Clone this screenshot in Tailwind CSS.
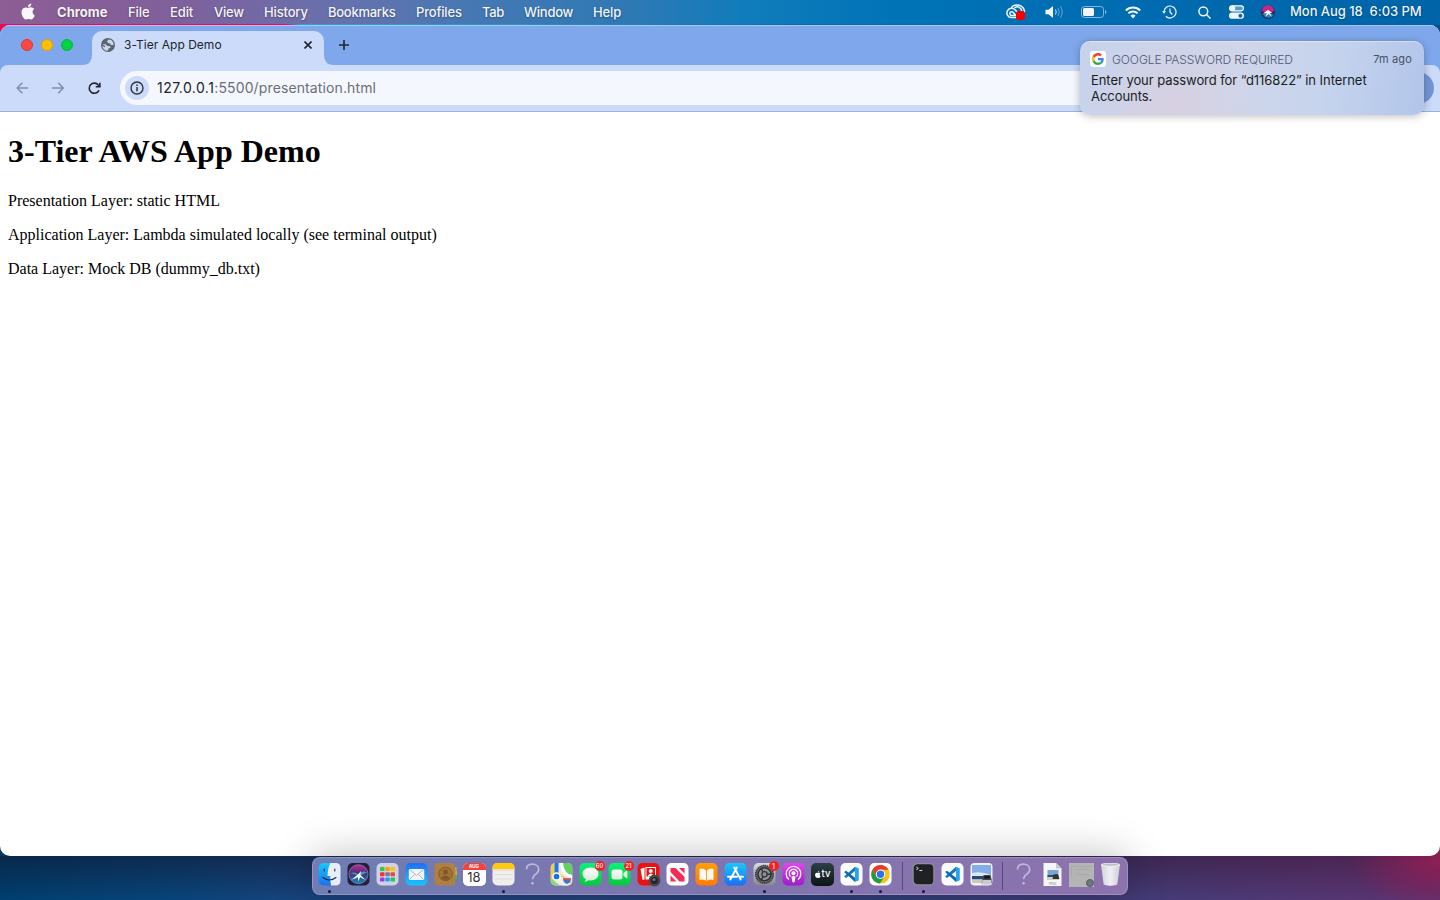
<!DOCTYPE html>
<html lang="en">
<head>
<meta charset="utf-8">
<title>3-Tier App Demo</title>
<script src="https://cdn.jsdelivr.net/npm/@tailwindcss/browser@4"></script>
</head>
<body class="w-[1440px] h-[900px] overflow-hidden font-['Inter',sans-serif] bg-[radial-gradient(ellipse_90px_50px_at_1440px_862px,rgba(150,30,85,.85),rgba(150,30,85,0)),linear-gradient(90deg,rgba(120,20,60,0)_50%,rgba(120,20,60,.45)_100%),linear-gradient(180deg,rgba(20,8,20,.42)_856px,rgba(20,8,20,0)_900px),linear-gradient(90deg,#003f70_0%,#08447a_12%,#1f4480_25%,#27437c_50%,#304a8c_78%,#3e4c96_92%,#454a98_100%)] relative">
<svg width="0" height="0" class="absolute">
  <defs>
    <linearGradient id="gBlue" x1="0" y1="0" x2="0" y2="1"><stop offset="0" stop-color="#19c8fb"/><stop offset="1" stop-color="#1b6ef3"/></linearGradient>
    <linearGradient id="gMail" x1="0" y1="0" x2="0" y2="1"><stop offset="0" stop-color="#1f6ff5"/><stop offset="1" stop-color="#18c5fa"/></linearGradient>
    <linearGradient id="gGreen" x1="0" y1="0" x2="0" y2="1"><stop offset="0" stop-color="#0cf27a"/><stop offset="1" stop-color="#06c83c"/></linearGradient>
    <linearGradient id="gPod" x1="0" y1="0" x2="0" y2="1"><stop offset="0" stop-color="#e844f4"/><stop offset="1" stop-color="#9a1fc4"/></linearGradient>
    <linearGradient id="gBook" x1="0" y1="0" x2="0" y2="1"><stop offset="0" stop-color="#ff9e0a"/><stop offset="1" stop-color="#ff7a00"/></linearGradient>
    <linearGradient id="gGrey" x1="0" y1="0" x2="0" y2="1"><stop offset="0" stop-color="#d8dade"/><stop offset="1" stop-color="#85878c"/></linearGradient>
    <linearGradient id="gSoft" x1="0" y1="0" x2="0" y2="1"><stop offset="0" stop-color="#fff"/><stop offset="1" stop-color="#d3ead6"/></linearGradient>
    <linearGradient id="gSiri" x1="0" y1="0" x2="0" y2="1"><stop offset="0" stop-color="#c22a92"/><stop offset=".45" stop-color="#4c2b7c"/><stop offset="1" stop-color="#1587b4"/></linearGradient>
    <linearGradient id="gTrash" x1="0" y1="0" x2="1" y2="0"><stop offset="0" stop-color="#d2d2da"/><stop offset=".5" stop-color="#efeff3"/><stop offset="1" stop-color="#cdccd6"/></linearGradient>
    <symbol id="apple" viewBox="0 0 24 24"><path d="M17.1 12.7c0-2.6 2.1-3.8 2.2-3.9-1.2-1.8-3.1-2-3.7-2-1.6-.2-3.1.9-3.9.9s-2-.9-3.4-.9c-1.700 0-3.300 1-4.200 2.600-1.800 3.100-.5 7.700 1.300 10.200.9 1.200 1.900 2.600 3.200 2.600 1.300-.1 1.800-.8 3.400-.8s2 .8 3.400.8 2.300-1.200 3.100-2.500c1-1.400 1.400-2.800 1.400-2.800s-2.800-1.100-2.800-4.200zM14.500 5.100c.7-.9 1.200-2.100 1.100-3.300-1 0-2.300.7-3 1.500-.7.8-1.300 2-1.100 3.200 1.100.1 2.300-.6 3-1.400z"/></symbol>
    <symbol id="question" viewBox="0 0 22 23"><path d="M5 6.500C5 3 7.500 1.200 11 1.200s6.200 2 6.200 5.300c0 3-2 4.100-4 5.500-1.500 1-2.100 2.100-2.100 4.200" fill="none" stroke="#bfb9dc" stroke-width="1.700"/><circle cx="11" cy="20.300" r="1.300" fill="#bfb9dc"/></symbol>
    <symbol id="vscode" viewBox="0 0 22 23"><rect width="22" height="22.500" rx="5" fill="#fdfdff"/><path d="M14.500 3.700 18.300 5.300v12l-3.800 1.700z" fill="#2aa3ee"/><path d="M14.500 3.700v4.200L5.500 15 3.600 13.600z" fill="#1276bf"/><path d="M14.500 19v-4.200L5.500 7.700 3.600 9z" fill="#0b68b0"/></symbol>
  </defs>
</svg>

<div class="flex h-[900px] flex-col">
  <!-- Menu bar -->
  <header class="flex h-6 shrink-0 items-center bg-[linear-gradient(90deg,#8d5d94_0%,#80609b_12%,#6572ae_24%,#4578b3_33%,#3079b4_43%,#107cbb_52%,#0073b7_62%,#0069ae_85%,#0064a8_100%)] text-[13px] font-medium text-white/95 [text-shadow:0_1px_2px_rgba(0,0,0,.3)]">
    <svg class="-mt-px ml-[18px] mr-[18px] h-[19px] w-[21px] fill-white/95"><use href="#apple"/></svg>
    <nav class="flex whitespace-nowrap pt-[2px]">
      <span class="w-[71px] font-bold tracking-[.05px]">Chrome</span>
      <span class="w-[42px] tracking-[-.1px]">File</span>
      <span class="w-[44px] tracking-[-.1px]">Edit</span>
      <span class="w-[50px] tracking-[-.2px]">View</span>
      <span class="w-[64px] tracking-[-.15px]">History</span>
      <span class="w-[88px] tracking-[-.27px]">Bookmarks</span>
      <span class="w-[66px] tracking-[-.17px]">Profiles</span>
      <span class="w-[42px] tracking-[-.3px]">Tab</span>
      <span class="w-[69px] tracking-[-.25px]">Window</span>
      <span class="tracking-[-.1px]">Help</span>
    </nav>
    <div class="ml-auto flex items-center">
      <svg class="mr-[18px]" width="22" height="18" viewBox="0 0 22 18" fill="none" stroke="#eef5fb" stroke-width="1.500"><path d="M6 5.500C8 1.200 15.500.6 18.500 5.500q1.200 2 1 4M12.500 14.600H6A4.700 4.700 0 1 1 10 6.700l4.500 4.700"/><path d="M11 12.600 8.600 10A1.900 1.900 0 1 0 7 12.500h4M9.500 5c3-2.500 6.500-1 7.500 3.500"/><rect x="11" y="8" width="9" height="9" rx="2.500" fill="#f50000" stroke="none"/></svg>
      <svg class="mr-[17px]" width="19" height="14" viewBox="0 0 19 14" fill="none"><path d="M.5 4.800h3L8 1v12L3.500 9.300h-3z" fill="#f0f5fa"/><path d="M10.500 4.500q1.500 2.500 0 5" stroke="#fff" stroke-opacity=".8"/><path d="M13 3q2.500 4 0 8M15.500 1.500q3.500 5.500 0 11" stroke="#fff" stroke-opacity=".4"/></svg>
      <svg class="mr-[18px]" width="26" height="12" viewBox="0 0 26 12"><rect x=".5" y=".5" width="22" height="11" rx="3" fill="none" stroke="#fff" stroke-opacity=".5"/><rect x="2" y="2" width="11" height="8" rx="1.500" fill="#f2f6fa"/><path d="M24 4v4q1.500-.5 1.500-2T24 4" fill="#fff" fill-opacity=".5"/></svg>
      <svg class="mr-[21px]" width="16" height="13" viewBox="0 0 16 13" fill="none" stroke="#f2f6fa" stroke-width="1.900"><path d="M.8 4.500a10.300 10.300 0 0 1 14.400 0M3.400 7.300a6.700 6.700 0 0 1 9.200 0"/><path d="m8 12.400 2.500-2.700a3.700 3.700 0 0 0-5 0z" fill="#f2f6fa" stroke="none"/></svg>
      <svg class="mr-[21px]" width="15" height="14" viewBox="0 0 15 14" fill="none" stroke="#f2f6fa" stroke-width="1.200"><path d="M2 7a6 6 0 1 1 1.800 4.300M8 3.500V7l2.300 2.500"/><path d="M0 6.200h4L2 8.800z" fill="#f2f6fa" stroke="none"/></svg>
      <svg class="mr-[18px]" width="13" height="13" viewBox="0 0 13 13" fill="none" stroke="#f2f6fa" stroke-width="1.500"><circle cx="5.300" cy="5.300" r="4.400"/><path d="m8.500 8.500 4 4"/></svg>
      <svg class="mr-[17px]" width="15" height="14" viewBox="0 0 15 14"><rect x="0" y=".2" width="15" height="6.200" rx="3.100" fill="#f2f6fa" fill-opacity=".35"/><rect x=".6" y=".8" width="13.800" height="5" rx="2.500" fill="none" stroke="#f2f6fa" stroke-width="1.200"/><circle cx="3.500" cy="3.300" r="2.800" fill="#f2f6fa"/><rect y="7.500" width="15" height="6.300" rx="3.150" fill="#f2f6fa"/><circle cx="11.400" cy="10.650" r="2" fill="#0d6aad"/></svg>
      <svg class="mr-[15px]" width="14" height="14" viewBox="0 0 14 14"><circle cx="7" cy="7" r="7" fill="#35275f"/><path d="M1 6a6 6 0 0 1 12 0L7 8z" fill="#c22b86"/><path d="M1.500 9.500 7 6l5.500 4a6 6 0 0 1-10 0z" fill="#2784b8"/><path d="m2 8.500 5-3.500 4.500 3-3-.2 2.500 4L7.500 9 4 12l2-4z" fill="#fff"/></svg>
      <span class="mr-[18px] w-[132px] whitespace-pre tracking-[-.04px]">Mon Aug 18  6:03 PM</span>
    </div>
  </header>
  <div class="h-px shrink-0 bg-[linear-gradient(90deg,#f20758_0,#f20758_285px,#29a5cc_300px,#219cc8_500px,#096aad_800px,#0061a4)]"></div>

  <!-- Browser window -->
  <div class="h-[831px] shrink-0 bg-[linear-gradient(90deg,#e90b55_50%,#0a4e86_50%),linear-gradient(90deg,#003a64_50%,#8a2050_50%)] bg-[length:100%_40px,100%_100%] bg-no-repeat">
  <main class="flex h-[831px] flex-col overflow-hidden rounded-[10px] bg-white">
    <div class="flex h-10 shrink-0 items-start border-t border-[#a9c6f5] bg-[#7fa8ec]">
      <div class="ml-[21px] mt-[13px] flex gap-2">
        <i class="size-3 rounded-full border border-[#de352f] bg-[#ff4742]"></i>
        <i class="size-3 rounded-full border border-[#dfa000] bg-[#ffbd03]"></i>
        <i class="size-3 rounded-full border border-[#08b83a] bg-[#00d341]"></i>
      </div>
      <svg class="mt-[29px]" width="19" height="10" viewBox="0 0 19 10"><path d="M19 0v10H9Q19 10 19 0" fill="#cbdbf9"/></svg>
      <div class="mt-[5px] flex h-[34px] w-[232px] items-center rounded-t-[10px] bg-[#cbdbf9] pb-[6px]">
        <svg class="ml-[9px]" width="14" height="14" viewBox="0 0 14 14"><circle cx="7" cy="7" r="7" fill="#5e6469"/><path d="M7.500 1.400 6 3.600 7 5l2 .2.500 1.500 3.200.5Q13 4 10.500 2.300 9 1.300 7.500 1.400" fill="#c6d7f5"/><path d="M1.300 6.300 4.500 6.300 6.500 8l2.800.3.200 1.500-2 .7-.7 2.300Q2 12.500 1.300 8l2.700 1.200.2-1.200z" fill="#c6d7f5"/></svg>
        <span class="ml-[9px] whitespace-nowrap text-xs text-[#20242b] tracking-[.02px]">3-Tier App Demo</span>
        <svg class="ml-auto mr-[12px]" width="8" height="8" viewBox="0 0 8 8" stroke="#20242b" stroke-width="1.600"><path d="m.5.5 7 7m0-7-7 7"/></svg>
      </div>
      <svg class="mt-[29px]" width="10" height="10" viewBox="0 0 10 10"><path d="M0 0v10h10Q0 10 0 0" fill="#cbdbf9"/></svg>
      <svg class="ml-[5px] mt-[14px]" width="10" height="10" viewBox="0 0 10 10" stroke="#20242b" stroke-width="1.600"><path d="M5 0v10M0 5h10"/></svg>
    </div>
    <div class="bg-[#7fa8ec]">
      <div class="flex h-[47px] items-center rounded-t-lg border-b border-[#9eb2d3] bg-[#cbdbf9]">
        <svg class="ml-4 shrink-0" width="13" height="12" viewBox="0 0 13 12" fill="none" stroke="#8390a9" stroke-width="1.500"><path d="M12 6H1.500M6.300.8 1.200 6l5.100 5.200"/></svg>
        <svg class="ml-[23px] shrink-0" width="13" height="12" viewBox="0 0 13 12" fill="none" stroke="#8390a9" stroke-width="1.500"><path d="M0 6h11.500M6.200.8 11.300 6l-5.100 5.200"/></svg>
        <svg class="ml-[23px] shrink-0" width="13" height="13" viewBox="0 0 13 13" fill="none" stroke="#20242b" stroke-width="1.600"><path d="M11 8.200A5.100 5.100 0 1 1 10.300 3l1.500 1.500M11.900.7v4.100H7.800"/></svg>
        <div class="ml-[19px] flex h-[34px] w-[1254px] shrink-0 items-center rounded-full bg-[#f4f7fe]">
          <div class="ml-[5px] flex size-6 items-center justify-center rounded-full bg-[#cbdbf9]">
            <svg width="14" height="14" viewBox="0 0 14 14"><circle cx="7" cy="7" r="6" fill="none" stroke="#30343a" stroke-width="1.400"/><path d="M7 6v4.300M7 3.500v1.500" stroke="#30343a" stroke-width="1.500"/></svg>
          </div>
          <span class="ml-[8px] text-sm text-[#6a6f76]"><b class="font-normal tracking-[.45px] text-[#20242b]">127.0.0.1</b><span class="tracking-[.12px]">:5500/presentation.html</span></span>
        </div>
        <div class="ml-[28px] size-8 shrink-0 rounded-full bg-[#7397d4]"></div>
      </div>
    </div>
    <article class="px-2 font-['Liberation_Serif',serif] text-base leading-[18px] text-black">
      <h1 class="mt-[21px] text-[32px] font-bold leading-[37px]">3-Tier AWS App Demo</h1>
      <p class="mt-[22px]">Presentation Layer: static HTML</p>
      <p class="mt-4">Application Layer: Lambda simulated locally (see terminal output)</p>
      <p class="mt-4">Data Layer: Mock DB (dummy_db.txt)</p>
    </article>
  </main>
  </div>

  <!-- Dock -->
  <div class="mx-auto mt-px flex h-[38px] w-[816px] shrink-0 items-start rounded-[8px] border border-white/20 bg-[linear-gradient(90deg,#6e7db3,#7b76ae_35%,#8574ae_70%,#8d73ae)] px-[1.500px] shadow-[0_0_40px_rgba(0,0,0,.28)] [&>div]:relative [&>div]:flex [&>div]:h-9 [&>div]:w-[29px] [&>div]:shrink-0 [&>div]:justify-center [&>div]:pt-[5px] [&_i]:absolute [&_i]:bottom-[1px] [&_i]:size-[3px] [&_i]:rounded-full [&_i]:bg-[#17153a] [&_svg]:h-[23px] [&_svg]:w-[23px]">
    <div><svg viewBox="0 0 22 23"><rect width="22" height="22.500" rx="5" fill="url(#gBlue)"/><path d="M12 0h5q5 0 5 5v12.500q0 5-5 5h-4.500Q11.500 18 11.800 13H9Q9.200 5 12 0" fill="#e9eef6"/><path d="M5.700 6v2M16.300 6v2M4.500 14.500q6.500 5 13 0" fill="none" stroke="#1b2a45" stroke-width="1.100" stroke-linecap="round"/></svg><i></i></div>
    <div><svg viewBox="0 0 22 23"><rect width="22" height="22.500" rx="5" fill="#231f42"/><circle cx="11" cy="11.200" r="9.500" fill="url(#gSiri)" stroke="#8f8aac" stroke-width=".7"/><path d="M2.500 10.500Q7 8 11 11.500 15 7 19.500 9.500 16 10.500 13.500 12.500l4 4.500-5.500-3.500-6 4 3.500-5Q6 10 2.500 10.500" fill="#3fb9cf" fill-opacity=".8"/><path d="m3.500 17 7-5.500 3-3.500-.7 4L18 17l-5.500-3-1.500 4.500-.7-4.500z" fill="#fff"/></svg></div>
    <div><svg viewBox="0 0 22 23"><rect width="22" height="22.500" rx="5" fill="#cfd2e2"/><g><rect x="3.500" y="4" width="4.500" height="4" rx="1" fill="#35c83d"/><rect x="8.800" y="4" width="4.500" height="4" rx="1" fill="#fa9e16"/><rect x="14" y="4" width="4.500" height="4" rx="1" fill="#ffc400"/><rect x="3.500" y="9.300" width="4.500" height="4" rx="1" fill="#f52d34"/><rect x="8.800" y="9.300" width="4.500" height="4" rx="1" fill="#777d89"/><rect x="14" y="9.300" width="4.500" height="4" rx="1" fill="#f3434a"/><rect x="3.500" y="14.600" width="4.500" height="4" rx="1" fill="#aa32ea"/><rect x="8.800" y="14.600" width="4.500" height="4" rx="1" fill="#269cf5"/><rect x="14" y="14.600" width="4.500" height="4" rx="1" fill="#20c55c"/></g></svg></div>
    <div><svg viewBox="0 0 22 23"><rect width="22" height="22.500" rx="5" fill="url(#gMail)"/><rect x="3.300" y="6" width="15.500" height="11" rx="1.300" fill="#f2f4f9"/><path d="m4 6.500 7 6 7-6M4 16.500l5-5m9 5-5-5" fill="none" stroke="#9aabc2" stroke-width=".8"/></svg></div>
    <div><svg viewBox="0 0 22 23"><path d="M19 4h3v4h-3z" fill="#aaa"/><path d="M19 8h3.500v4H19z" fill="#f4a21f"/><path d="M19 12h3.500v4H19z" fill="#41b84b"/><path d="M19 16h3v3h-3z" fill="#3a8be0"/><rect x="0" width="20.800" height="22.500" rx="4" fill="#b08040"/><circle cx="11" cy="11" r="6.800" fill="#a17336" stroke="#80592a" stroke-width=".9"/><circle cx="11" cy="9" r="2.500" fill="#80592a"/><path d="M6.300 15q4.700-5 9.400 0-4.500 4-9.400 0" fill="#80592a"/></svg></div>
    <div><span class="flex h-[22.500px] w-[23px] flex-col items-center overflow-hidden rounded-[5px] bg-white"><b class="h-[7px] w-full bg-[#f2433f] text-center text-[4.500px] font-bold leading-[7px] text-white">AUG</b><b class="text-[13px] font-normal leading-[15px] text-[#333]">18</b></span></div>
    <div><svg viewBox="0 0 22 23"><rect width="22" height="22.500" rx="5" fill="#f1efec"/><path d="M0 6V5q0-5 5-5h12q5 0 5 5v1z" fill="#ffca0a"/><path d="M1 7h20" stroke="#bcb6a9" stroke-width=".7" stroke-dasharray="1 .6"/><path d="M2 11.500h18M2 16h18" stroke="#d5d2cf" stroke-width=".6"/></svg><i></i></div>
    <div><svg><use href="#question"/></svg></div>
    <div><svg viewBox="0 0 22 23"><clipPath id="mapclip"><rect width="22" height="22.500" rx="5"/></clipPath><g clip-path="url(#mapclip)"><rect width="22" height="23" fill="#e9ecdf"/><path d="M10 0h12v12Q12 11 10 0" fill="#64d05e"/><path d="M11 0q1 12 11 14" fill="none" stroke="#fff" stroke-width="3"/><path d="m8 8 14 13v2H12L6 14z" fill="#f2efe8"/><path d="m7 10 15 11" stroke="#f7cb46" stroke-width="2"/><path d="M0 0h4v23H0z" fill="#f5cb45"/><path d="M0 15 10 23H0z" fill="#86d981"/><path d="M4 0h4v13H4z" fill="#1f76e8"/><circle cx="6" cy="13.500" r="3.600" fill="#1774e8" stroke="#fff" stroke-width="1.500"/><path d="M13 15q3.500 1 7 0 1.500 4-3.500 6-5-2-3.500-6" fill="#4376c9"/><path d="M13 15q3.500 1 7 0v2h-7z" fill="#e2484b"/></g></svg></div>
    <div><svg viewBox="0 0 22 23"><rect width="22" height="22.500" rx="5" fill="url(#gGreen)"/><path d="M11 4.500c5 0 8 3 8 6.500s-3 6.500-8 6.500l-2-.2q-2 1.700-4 1.300 1.200-1 1.300-2.400Q3 14 3 11c0-3.500 3-6.500 8-6.500" fill="url(#gSoft)"/></svg><b class="absolute right-0 top-[3px] flex size-[10px] items-center justify-center rounded-full bg-[#f81e1e] text-[6px] font-medium leading-none text-white">60</b></div>
    <div><svg viewBox="0 0 22 23"><rect width="22" height="22.500" rx="5" fill="url(#gGreen)"/><rect x="3" y="6.500" width="11" height="10" rx="2.500" fill="url(#gSoft)"/><path d="m15 10 3.800-2.700v8.400L15 13z" fill="url(#gSoft)"/></svg><b class="absolute right-0 top-[3px] flex size-[10px] items-center justify-center rounded-full bg-[#f81e1e] text-[6px] font-medium leading-none text-white">21</b></div>
    <div><svg viewBox="0 0 22 23" class="overflow-visible"><rect width="22" height="22.500" rx="5" fill="#ed1212"/><path d="m3 6 4-1.500v12L5 17z" fill="#fff"/><rect x="8" y="4" width="10.500" height="12.500" fill="#fff"/><rect x="9" y="5" width="8.500" height="8.500" fill="#ed1212"/><circle cx="13.200" cy="8" r="2" fill="#fff"/><path d="M10 13.500q3-6 6.500 0z" fill="#fff"/><circle cx="17" cy="17.500" r="5.900" fill="#484848"/><circle cx="17" cy="17.500" r="3.500" fill="#202630"/><circle cx="16.500" cy="16.500" r="1.500" fill="#6d7280"/></svg></div>
    <div><svg viewBox="0 0 22 23"><rect width="22" height="22.500" rx="5" fill="#fff"/><path d="M4 5h5l9 9v4.500h-5L4 9z" fill="#f52b57"/><path d="M12.500 5H18v5.500zM4 12.500v6h6z" fill="#f52b57"/></svg></div>
    <div><svg viewBox="0 0 22 23"><rect width="22" height="22.500" rx="5" fill="url(#gBook)"/><path d="M10.600 7.500Q7.500 4.500 4 6v11q3.500-1.200 6.600.8zm.8 0Q14.500 4.500 18 6v11q-3.500-1.200-6.600.8z" fill="#fff8ee"/></svg></div>
    <div><svg viewBox="0 0 22 23"><rect width="22" height="22.500" rx="5" fill="url(#gBlue)"/><path d="m12.300 4.500-6.500 12M9.700 4.500l6.500 12M3.500 13.700h9M15 13.700h3.500" stroke="#fff" stroke-width="1.900" stroke-linecap="round"/></svg></div>
    <div><svg viewBox="0 0 22 23"><rect width="22" height="22.500" rx="5" fill="url(#gGrey)"/><circle cx="11" cy="11.300" r="8.800" fill="#6c6f73" stroke="#303235" stroke-width="1.500" stroke-dasharray="1.300 .6"/><circle cx="11" cy="11.300" r="6.500" fill="#8f9297" stroke="#303235" stroke-width="1.500"/><circle cx="11" cy="11.300" r="2.600" fill="none" stroke="#303235" stroke-width="1.300"/><path d="M13.500 11.300H18M9.700 9 7.500 5.300M9.700 13.600l-2.200 3.700" stroke="#303235" stroke-width="1.400"/></svg><b class="absolute right-0 top-[3px] flex size-[10px] items-center justify-center rounded-full bg-[#f81e1e] text-[7px] font-medium leading-none text-white">1</b><i></i></div>
    <div><svg viewBox="0 0 22 23"><rect width="22" height="22.500" rx="5" fill="url(#gPod)"/><g fill="none" stroke="#fff" stroke-width="1.300"><path d="M6.500 16.500a7.300 7.300 0 1 1 9 0M8 13.500a4.200 4.200 0 1 1 6 0"/></g><circle cx="11" cy="10.300" r="2" fill="#fff"/><path d="M9 13.500q2-1.200 4 0l-.8 5.300q-1.200 1.200-2.400 0z" fill="#fff"/></svg></div>
    <div><span class="flex h-[22.500px] w-[23px] items-center justify-center rounded-[5px] bg-[linear-gradient(#2d4046,#0d1416)] text-[9.500px] font-medium text-white"><svg class="mt-px h-[9px]! w-[8px]! fill-white"><use href="#apple"/></svg>tv</span></div>
    <div><svg><use href="#vscode"/></svg><i></i></div>
    <div><svg viewBox="0 0 22 23"><rect width="22" height="22.500" rx="5" fill="#fff"/><circle cx="11" cy="11.300" r="9.300" fill="#fbc116"/><path d="M2.950 6.650a9.300 9.300 0 0 1 16.100 0H11l-4 7z" fill="#e83b2e"/><path d="M2.950 6.650a9.300 9.300 0 0 0 7.500 13.900l4.500-7L7 13.600z" fill="#229b48"/><circle cx="11" cy="11.300" r="4.700" fill="#fff"/><circle cx="11" cy="11.300" r="3.700" fill="#2874e8"/></svg><i></i></div>
    <span class="ml-[7.500px] mr-[5.500px] mt-1 h-7 w-px shrink-0 bg-[#574a87]"></span>
    <div><svg viewBox="0 0 22 23"><rect x=".6" y=".6" width="20.800" height="21.300" rx="4.500" fill="#202124" stroke="#8b9194" stroke-width="1.200"/><path d="m3.800 4 2 1.400-2 1.400M6.800 7.500h3" fill="none" stroke="#eee" stroke-width=".9"/></svg><i></i></div>
    <div><svg><use href="#vscode"/></svg></div>
    <div><svg viewBox="0 0 22 23" class="overflow-visible"><rect width="22" height="22.500" rx="4" fill="#f0f2f6"/><path d="M1.500 2h19v11h-19z" fill="#83aee8"/><path d="M1.500 10q9-2 19 2v2h-19z" fill="#dce8f4"/><path d="M1.500 13h19v3.500h-19z" fill="#254b78"/><path d="M1.500 16.500h19V20h-19z" fill="#cfc9bd"/><path d="M13 12h7l2 8H11z" fill="#45484d"/><path d="M12 17h9v4.500h-10z" fill="#c7cace"/><path d="M14 13h5l.5 2.500h-6z" fill="#15171b"/></svg></div>
    <span class="ml-[6.500px] mr-[5.500px] mt-1 h-7 w-px shrink-0 bg-[#574a87]"></span>
    <div><svg><use href="#question"/></svg></div>
    <div><svg viewBox="0 0 22 23"><path d="M2 0h12.500L20 5.500V23H2z" fill="#f6f6f8"/><path d="M14.500 0v5.500H20z" fill="#c8c8d0"/><path d="M6 7h11v10H6z" fill="#79a5da"/><path d="M6 12h11v2H6z" fill="#294c73"/><path d="M6 14h11v3H6z" fill="#d2d0c9"/><path d="m12 11.500 4-.5 2 5h-7z" fill="#333"/><text x="11" y="21.500" text-anchor="middle" font-size="3.600" font-family="Inter" fill="#888">PNG</text></svg></div>
    <div><span class="relative h-[24px] w-[25px] shrink-0 bg-[#b5b4b5]"><span class="absolute left-[2px] top-[3px] h-[10px] w-[20px] border-l border-t border-[#a9a9ab]"></span><span class="absolute left-[8px] top-[6px] h-px w-3 bg-[#a9a9ab]"></span><span class="absolute left-[8px] top-[11px] h-px w-3 bg-[#a9a9ab]"></span><span class="absolute bottom-0 right-0 size-[8px] rounded-full border border-[#555b62] bg-[#6c7983]"></span></span></div>
    <div><svg viewBox="0 0 22 23"><path d="M1.500 1.800h19l-2.700 19.700q-6.800 2.500-13.600 0z" fill="url(#gTrash)"/><ellipse cx="11" cy="1.800" rx="9.500" ry="1.500" fill="#c0c0cb" stroke="#f5f5f8" stroke-width=".8"/></svg></div>
  </div>
</div>

<!-- Notification -->
<aside class="absolute left-[1080px] top-[41px] flex h-[74px] w-[344px] flex-col rounded-[10px] border-t border-white/40 bg-[radial-gradient(circle_at_90px_75px,#d8cfe0_0,rgba(216,207,224,0)_90px),linear-gradient(100deg,#c6d3ec_0%,#d0d6ea_45%,#c6d4ed_70%,#b2c5ea_100%)] pl-[10px] pr-[12px] pt-[9px] shadow-[0_1px_8px_rgba(0,0,0,.28)]">
  <div class="flex h-4 items-center">
    <span class="flex size-4 items-center justify-center rounded-[3px] bg-white"><svg width="12" height="12" viewBox="0 0 48 48"><path fill="#ea4335" d="M24 9.500c3.540 0 6.710 1.220 9.210 3.600l6.850-6.850C35.900 2.380 30.470 0 24 0 14.620 0 6.510 5.380 2.560 13.220l7.980 6.190C12.430 13.720 17.740 9.500 24 9.500z"/><path fill="#4285f4" d="M46.980 24.550c0-1.570-.15-3.090-.38-4.550H24v9.020h12.940c-.58 2.960-2.260 5.480-4.780 7.180l7.730 6c4.510-4.180 7.090-10.360 7.090-17.650z"/><path fill="#fbbc05" d="M10.530 28.590a14.500 14.500 0 0 1 0-9.180l-7.980-6.190a24 24 0 0 0 0 21.560l7.980-6.190z"/><path fill="#34a853" d="M24 48c6.480 0 11.930-2.130 15.890-5.810l-7.730-6c-2.150 1.450-4.920 2.300-8.160 2.300-6.260 0-11.570-4.220-13.470-9.910l-7.980 6.190C6.510 42.620 14.620 48 24 48z"/></svg></span>
    <span class="ml-[6px] pt-[2px] text-xs font-light tracking-[-.08px] text-[#4d5a76]">GOOGLE PASSWORD REQUIRED</span>
    <span class="ml-auto text-[11px] text-[#465269] tracking-[.15px]">7m ago</span>
  </div>
  <p class="ml-px mt-[5px] whitespace-nowrap text-[13px] leading-4 text-[#191d24] tracking-[-.06px]">Enter your password for “d116822” in Internet<br>Accounts.</p>
</aside>
</body>
</html>
